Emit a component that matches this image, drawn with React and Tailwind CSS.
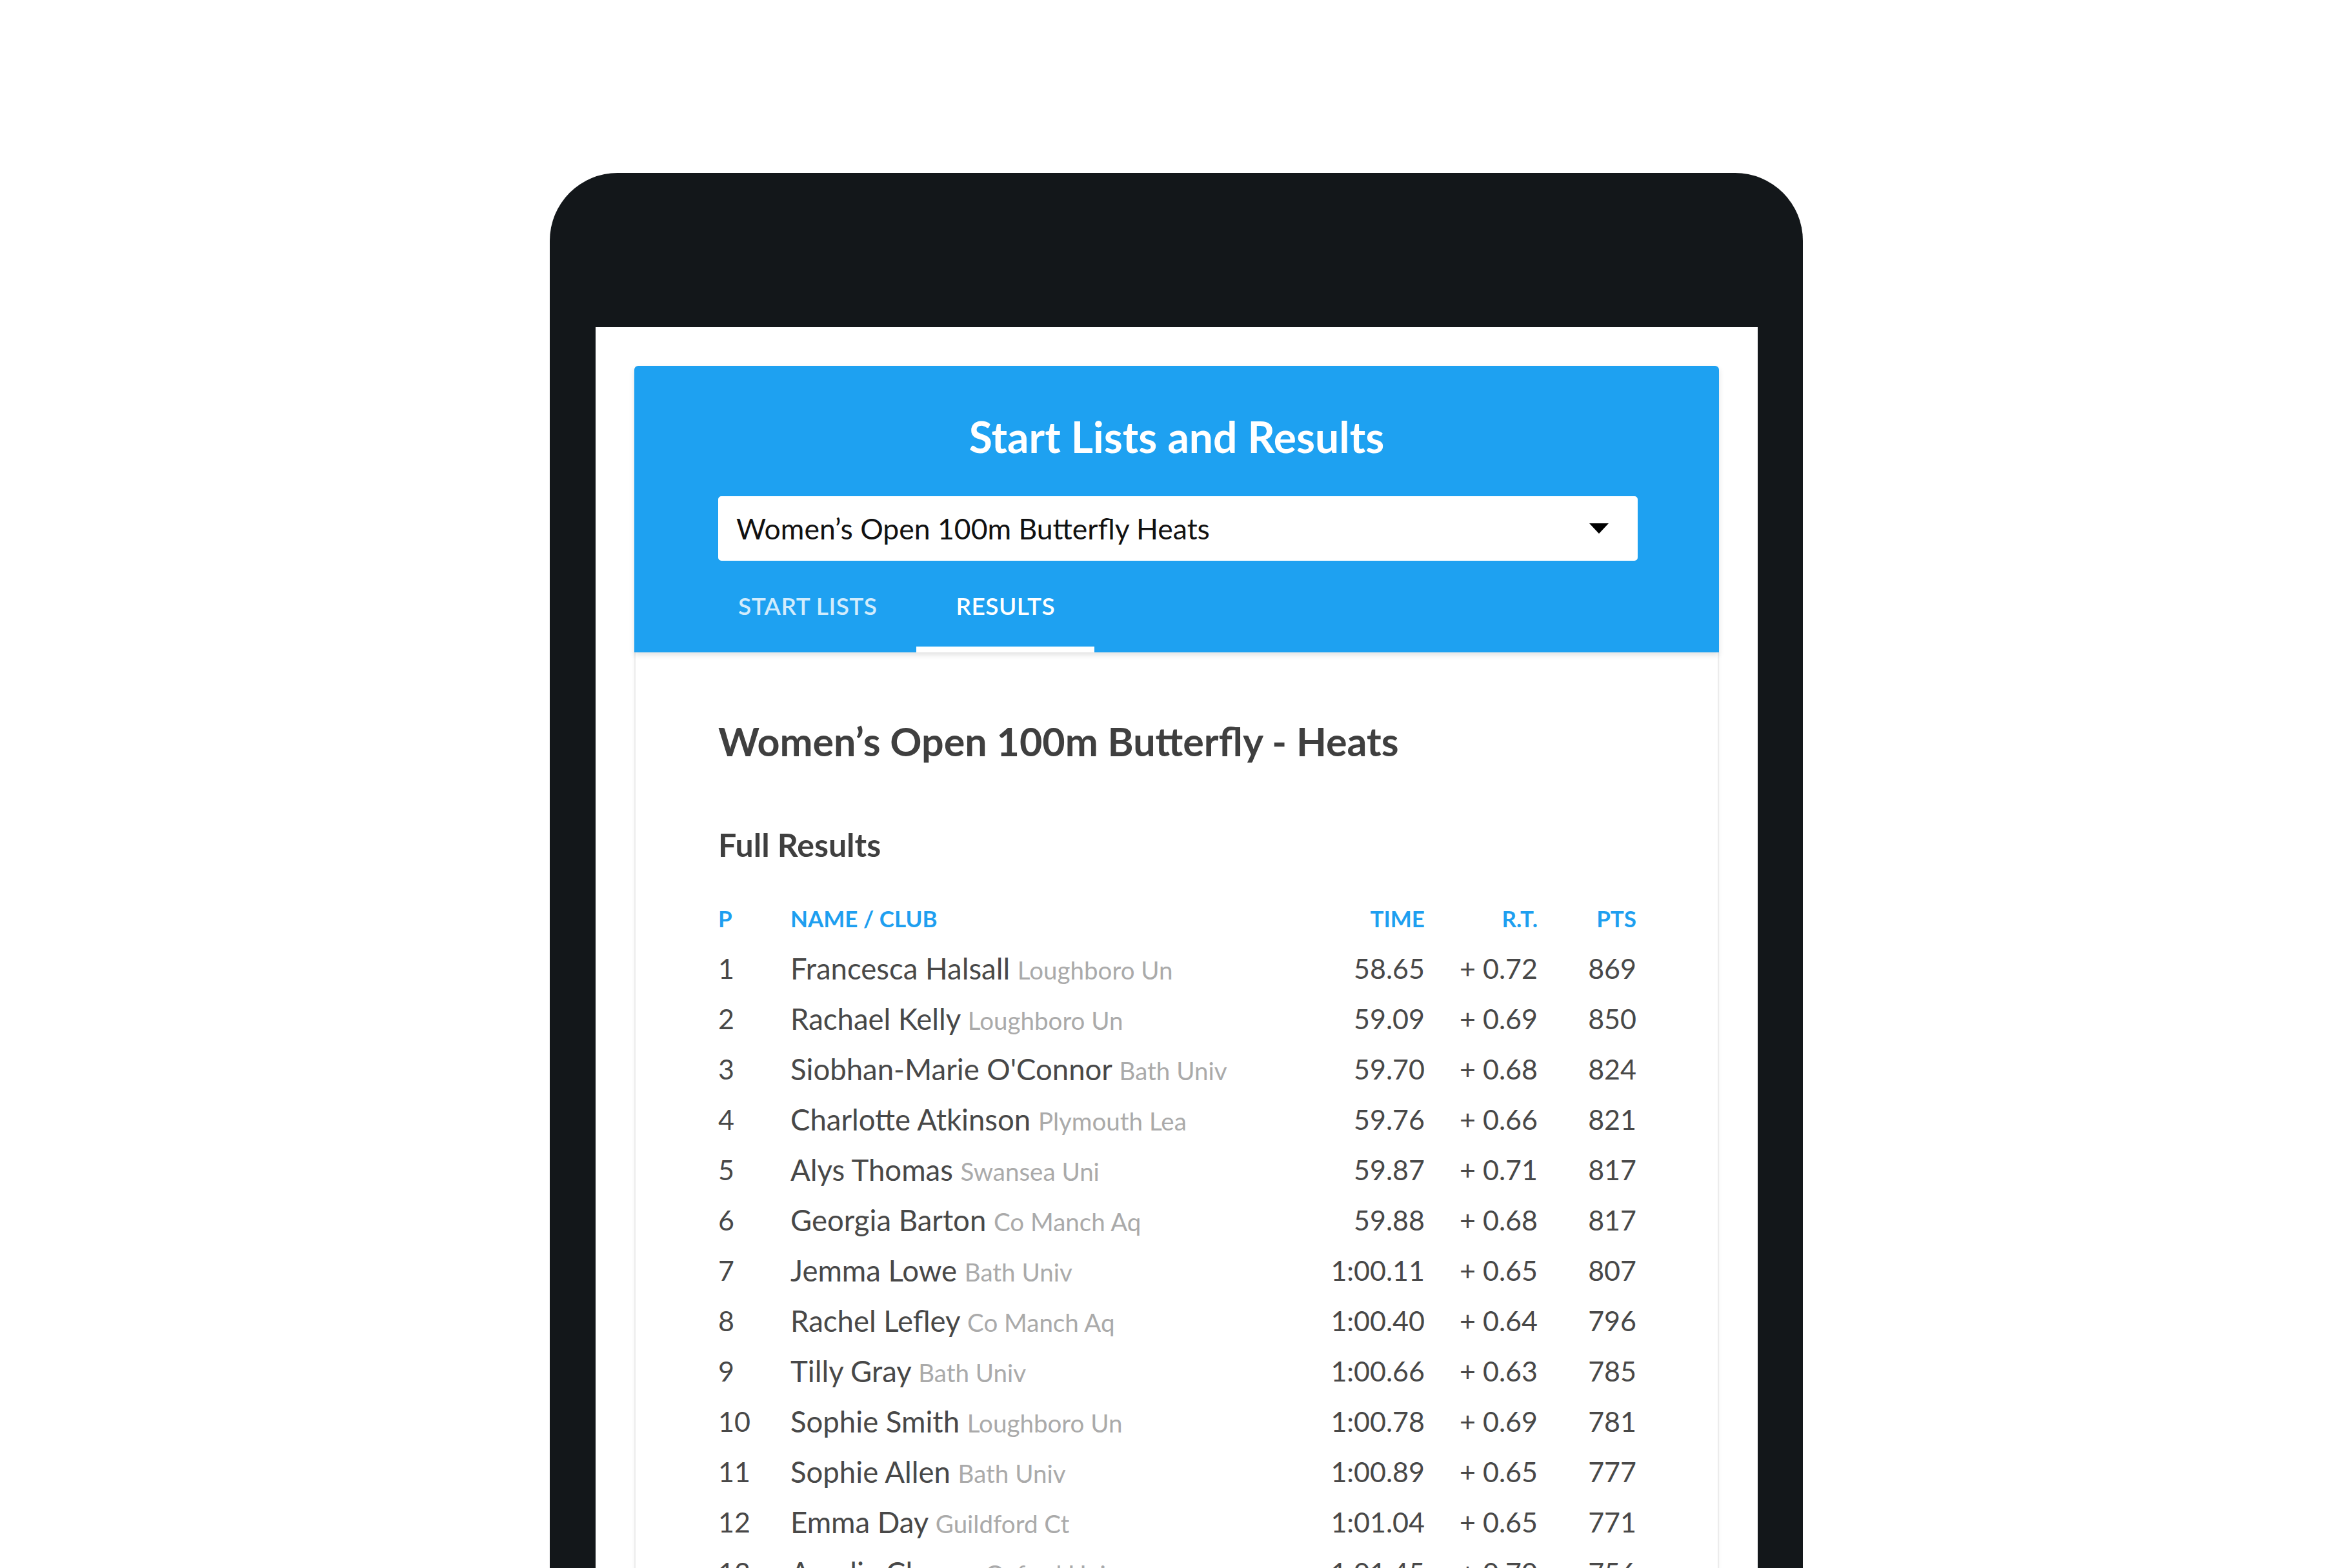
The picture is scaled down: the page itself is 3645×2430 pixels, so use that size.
const rows = [
  { p: 1, name: "Francesca Halsall", club: "Loughboro Un", time: "58.65", rt: "+ 0.72", pts: 869 },
  { p: 2, name: "Rachael Kelly", club: "Loughboro Un", time: "59.09", rt: "+ 0.69", pts: 850 },
  { p: 3, name: "Siobhan-Marie O'Connor", club: "Bath Univ", time: "59.70", rt: "+ 0.68", pts: 824 },
  { p: 4, name: "Charlotte Atkinson", club: "Plymouth Lea", time: "59.76", rt: "+ 0.66", pts: 821 },
  { p: 5, name: "Alys Thomas", club: "Swansea Uni", time: "59.87", rt: "+ 0.71", pts: 817 },
  { p: 6, name: "Georgia Barton", club: "Co Manch Aq", time: "59.88", rt: "+ 0.68", pts: 817 },
  { p: 7, name: "Jemma Lowe", club: "Bath Univ", time: "1:00.11", rt: "+ 0.65", pts: 807 },
  { p: 8, name: "Rachel Lefley", club: "Co Manch Aq", time: "1:00.40", rt: "+ 0.64", pts: 796 },
  { p: 9, name: "Tilly Gray", club: "Bath Univ", time: "1:00.66", rt: "+ 0.63", pts: 785 },
  { p: 10, name: "Sophie Smith", club: "Loughboro Un", time: "1:00.78", rt: "+ 0.69", pts: 781 },
  { p: 11, name: "Sophie Allen", club: "Bath Univ", time: "1:00.89", rt: "+ 0.65", pts: 777 },
  { p: 12, name: "Emma Day", club: "Guildford Ct", time: "1:01.04", rt: "+ 0.65", pts: 771 },
  { p: 13, name: "Amelia Clymer", club: "Oxford Univ", time: "1:01.45", rt: "+ 0.70", pts: 756 },
];

const cols = "grid grid-cols-[112px_783px_200px_175px_153px] items-center";

export default function App() {
  return (
    <div className="h-[2430px] w-[3645px] overflow-hidden bg-white font-['Lato',sans-serif]">
      <div className="ml-[852px] mt-[268px] flex h-[2162px] w-[1942px] flex-col rounded-t-[105px] bg-[#13171a] pl-[71px] pr-[70px] pt-[239px]">
        <div className="flex-1 bg-white px-[60px] pt-[60px]">
          {/* header */}
          <div className="relative z-10 rounded-t-[6px] bg-[#1ea1f1] shadow-[0_4px_8px_rgba(0,0,0,0.12)]">
            <h1 className="pt-[70px] text-center text-[66px] font-bold leading-[80px] text-white">
              Start Lists and Results
            </h1>
            <div className="ml-[130px] mr-[126px] mt-[52px] flex h-[100px] items-center justify-between rounded-[5px] bg-white pl-[28px] pr-[45px]">
              <span className="text-[44.5px] text-[#111]">Women’s Open 100m Butterfly Heats</span>
              <svg width="30" height="16" viewBox="0 0 30 16">
                <polygon points="0,0 30,0 15,16" fill="#000" />
              </svg>
            </div>
            <div className="flex h-[142px] pl-[100px]">
              <div className="flex items-center border-b-[9px] border-transparent px-[61px] pt-[7px] text-[37px] font-semibold tracking-[0.5px] text-white/80">
                START LISTS
              </div>
              <div className="flex items-center border-b-[9px] border-white px-[61px] pt-[7px] text-[37px] font-semibold tracking-[0.5px] text-white">
                RESULTS
              </div>
            </div>
          </div>
          {/* content */}
          <div className="h-[1500px] border-x-2 border-[#ececec] px-[128px] pt-[98px] text-[#484848] shadow-[0_0_6px_rgba(0,0,0,0.05)]">
            <h2 className="text-[61px] font-bold leading-[80px] text-[#3f3f3f]">
              Women’s Open 100m Butterfly - Heats
            </h2>
            <h3 className="mt-[90px] text-[50px] font-bold leading-[60px] text-[#3f3f3f]">Full Results</h3>
            <div className={`${cols} mt-[45px] h-[78px] text-[35px] font-bold text-[#1e9ff0]`}>
              <div>P</div>
              <div>NAME / CLUB</div>
              <div className="text-right">TIME</div>
              <div className="text-right">R.T.</div>
              <div className="text-right">PTS</div>
            </div>
            {rows.map((r) => (
              <div key={r.p} className={`${cols} h-[78px] text-[43px]`}>
                <div>{r.p}</div>
                <div className="whitespace-nowrap text-[45.5px]">
                  {r.name} <span className="text-[38.5px] text-[#aaaaaa]">{r.club}</span>
                </div>
                <div className="text-right">{r.time}</div>
                <div className="text-right">{r.rt}</div>
                <div className="text-right">{r.pts}</div>
              </div>
            ))}
          </div>
        </div>
      </div>
    </div>
  );
}
